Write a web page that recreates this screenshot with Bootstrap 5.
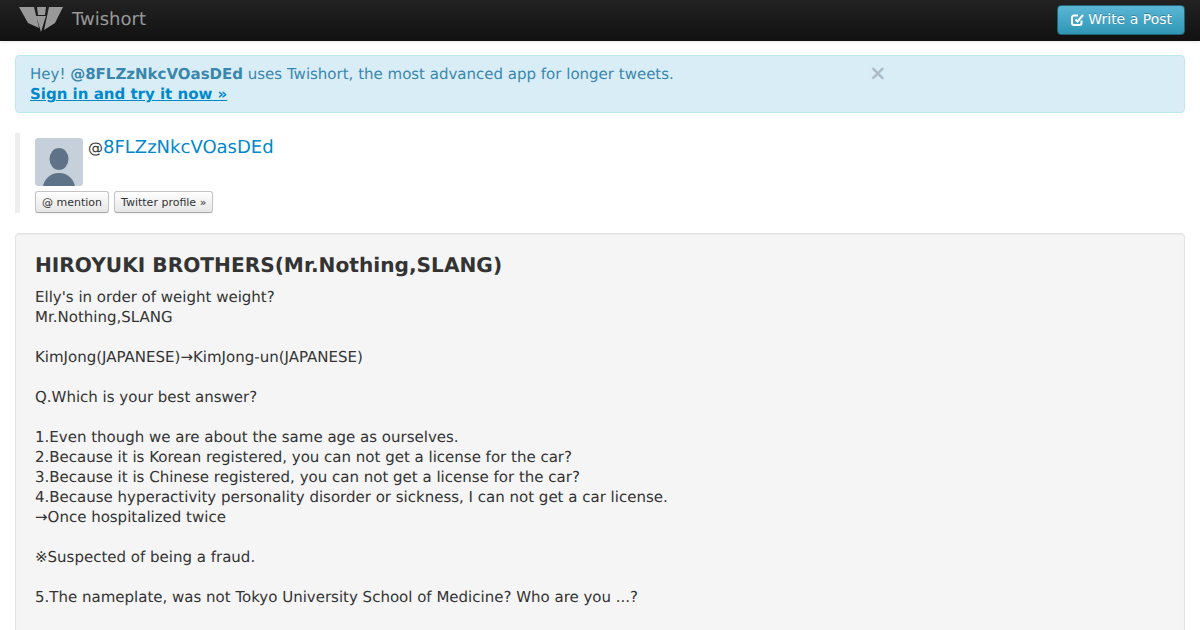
<!DOCTYPE html>
<html lang="en">
<head>
<meta charset="utf-8">
<title>Twishort</title>
<link href="https://cdn.jsdelivr.net/npm/bootstrap@5.3.0/dist/css/bootstrap.min.css" rel="stylesheet">
<style>
html,body{height:630px;overflow:hidden}
body{font-family:"DejaVu Sans",sans-serif;font-size:15px;line-height:20px;color:#333;background:#fff;text-rendering:geometricPrecision}
.topbar{height:41px;background:linear-gradient(#222,#111);box-shadow:0 1px 3px rgba(0,0,0,.1);padding:0 15px 0 19px}
.brandmark{color:#999;font-size:18px;line-height:20px;text-decoration:none;gap:9px;padding-bottom:2px}
.logomark{margin-bottom:3px}
.postbtn{height:30px;margin-top:5px;padding:0 12px 2px 13px;font-size:14px;line-height:26px;color:#fff;background:linear-gradient(#5bb6d6,#2f96b4);border:1px solid #1f6377;border-radius:4px;text-shadow:0 -1px 0 rgba(0,0,0,.25)}
.notice{margin:14px 15px 20px;height:58px;padding:8px 14px;background:#d9edf7;border:1px solid #bce8f1;border-radius:4px;color:#3a87ad}
.notice-inner{width:839px}
.notice a{color:#0088cc;font-weight:700;text-decoration:underline}
.closer{font-size:21px;font-weight:700;line-height:18px;color:#000;opacity:.2}
.profile{margin:0 15px 20px;height:80px;border-left:5px solid #eee;padding:5px 0 0 15px}
.avatar{width:48px;height:48px;border-radius:4px;background:#c5d0da;overflow:hidden;display:block}
.handle{line-height:18px;margin:1px 0 0 5px;color:#333}
.handle a{font-size:18px;color:#0088cc;text-decoration:none}
.minirow{gap:5px;margin-top:5px}
.minibtn{height:22px;padding:1px 6px 0;font-size:11px;line-height:19px;color:#333;background:linear-gradient(#fff,#e6e6e6);border:1px solid #c4c4c4;border-bottom-color:#a8a8a8;border-radius:3px;box-shadow:inset 0 1px 0 rgba(255,255,255,.2),0 1px 2px rgba(0,0,0,.05)}
.postwell{margin:0 15px;padding:20px 19px 19px;height:500px;background:#f5f5f5;border:1px solid #e3e3e3;border-radius:4px;box-shadow:inset 0 1px 1px rgba(0,0,0,.05)}
.posttitle{font-size:20.150px;line-height:22px;font-weight:700;margin:0 0 11px;color:#333}
.posttext{white-space:pre-line;margin:0}
</style>
</head>
<body>
<nav class="topbar d-flex justify-content-between">
  <a class="brandmark d-flex align-items-center" href="#">
    <svg class="logomark" width="44" height="30" viewBox="0 0 44 30" aria-hidden="true"><path fill="#999" d="M0 4 15 4 20 25 9 20ZM44 4 30 4 25 27 36 20ZM18 4 27 4 26 12 19 12ZM17 13 27 13 22 29Z"/></svg>
    <span>Twishort</span>
  </a>
  <button class="postbtn d-flex align-items-center gap-1" type="button">
    <svg width="13" height="13" viewBox="0 0 13 13" aria-hidden="true"><path fill="none" stroke="#fff" stroke-width="2" d="M10.5 7.5V10a2 2 0 0 1-2 2H3a2 2 0 0 1-2-2V4.500a2 2 0 0 1 2-2h4"/><path fill="none" stroke="#fff" stroke-width="2" d="M4.500 6.500 6.500 8.500 12 2"/></svg>
    <span>Write a Post</span>
  </button>
</nav>
<div class="notice d-flex">
  <div class="notice-inner">Hey! <strong>@8FLZzNkcVOasDEd</strong> uses Twishort, the most advanced app for longer tweets.<br><a href="#">Sign in and try it now »</a></div>
  <span class="closer">×</span>
</div>
<section class="profile">
  <div class="d-flex">
    <svg class="avatar" viewBox="0 0 48 48" aria-hidden="true"><rect width="48" height="48" fill="#c5d0da"/><ellipse cx="24" cy="21" rx="9.500" ry="11" fill="#5f7388"/><ellipse cx="24" cy="50" rx="16" ry="15" fill="#5f7388"/></svg>
    <div class="handle">@<a href="#">8FLZzNkcVOasDEd</a></div>
  </div>
  <div class="d-flex minirow">
    <button class="minibtn" type="button">@ mention</button>
    <button class="minibtn" type="button">Twitter profile »</button>
  </div>
</section>
<article class="postwell">
  <h3 class="posttitle">HIROYUKI BROTHERS(Mr.Nothing,SLANG)</h3>
  <p class="posttext">Elly's in order of weight weight?
Mr.Nothing,SLANG

KimJong(JAPANESE)→KimJong-un(JAPANESE)

Q.Which is your best answer?

1.Even though we are about the same age as ourselves.
2.Because it is Korean registered, you can not get a license for the car?
3.Because it is Chinese registered, you can not get a license for the car?
4.Because hyperactivity personality disorder or sickness, I can not get a car license.
→Once hospitalized twice

※Suspected of being a fraud.

5.The nameplate, was not Tokyo University School of Medicine? Who are you ...?
</p>
</article>
</body>
</html>
